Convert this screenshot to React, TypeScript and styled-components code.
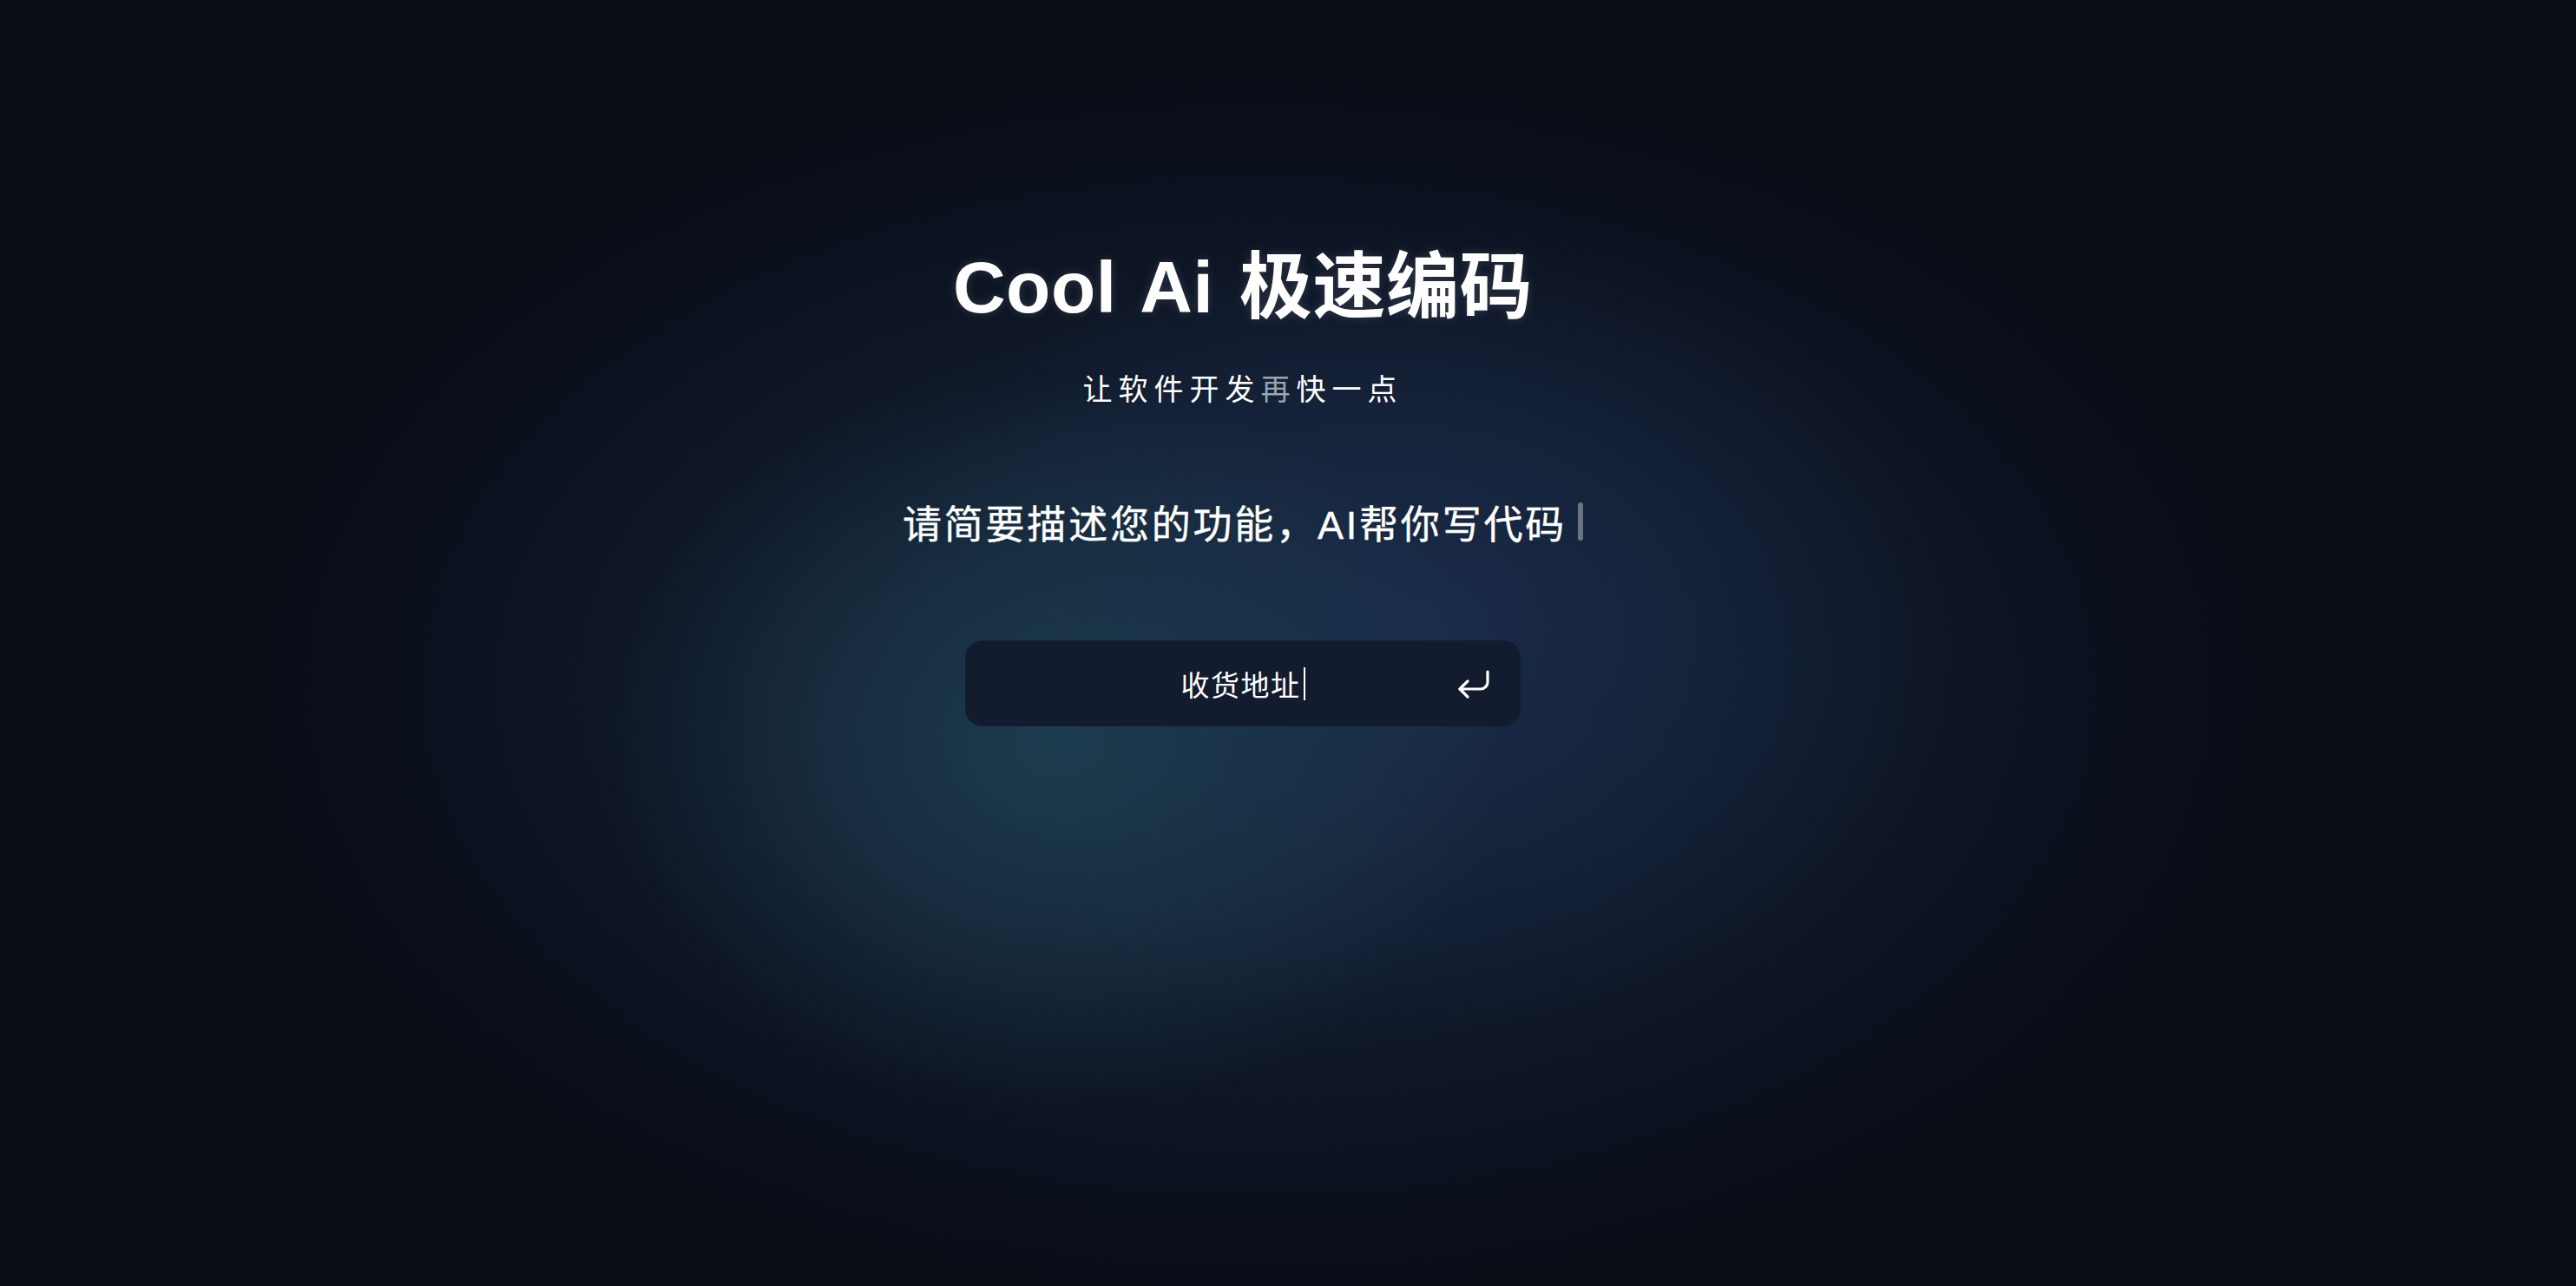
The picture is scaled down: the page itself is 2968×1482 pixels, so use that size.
import { FC } from 'react';
import styled, { createGlobalStyle } from 'styled-components';

const GlobalStyle = createGlobalStyle`
  html, body {
    margin: 0;
    padding: 0;
    background: #090d16;
  }
  * {
    box-sizing: border-box;
  }
`;

const Page = styled.div`
  width: 2968px;
  height: 1482px;
  overflow: hidden;
  display: flex;
  flex-direction: column;
  align-items: center;
  padding: 281px 104px 0 0;
  font-family: 'Liberation Sans', 'Noto Sans CJK SC', sans-serif;
  color: #ffffff;
  background:
    radial-gradient(ellipse 520px 430px at 1210px 860px, rgba(30, 64, 82, 0.85), rgba(30, 64, 82, 0) 100%),
    radial-gradient(ellipse 620px 470px at 1640px 720px, rgba(27, 46, 78, 0.75), rgba(27, 46, 78, 0) 100%),
    radial-gradient(ellipse 1180px 720px at 1450px 790px, #16253b 0%, #111c2e 45%, #0c1220 75%, #090d16 100%);
`;

const Title = styled.h1`
  margin: 0;
  height: 100px;
  line-height: 100px;
  font-size: 84px;
  font-weight: 700;
  letter-spacing: 0.5px;
  word-spacing: 6px;
  white-space: nowrap;
  text-shadow: 0 0 12px rgba(255, 255, 255, 0.14);
`;

const Subtitle = styled.div`
  margin-top: 43px;
  height: 50px;
  line-height: 50px;
  font-size: 34px;
  letter-spacing: 7px;
  white-space: nowrap;
`;

const Dim = styled.span`
  color: #9aa5b2;
`;

const Prompt = styled.div`
  margin-top: 97px;
  height: 60px;
  display: flex;
  align-items: center;
  font-size: 45px;
  letter-spacing: 2.8px;
  white-space: nowrap;
  -webkit-text-stroke: 0.4px #ffffff;
`;

const BlockCursor = styled.span`
  display: inline-block;
  width: 6px;
  height: 44px;
  margin-left: 13px;
  border-radius: 3px;
  background: #6b7482;
`;

const InputBox = styled.div`
  margin-top: 107px;
  width: 640px;
  height: 99px;
  border-radius: 20px;
  background: #131c2e;
  display: grid;
  grid-template-columns: 1fr auto 1fr;
  align-items: center;
  padding: 0 30px;
`;

const InputText = styled.div`
  grid-column: 2;
  display: flex;
  align-items: center;
  font-size: 33px;
  letter-spacing: 1.5px;
  white-space: nowrap;
`;

const Caret = styled.span`
  display: inline-block;
  width: 2px;
  height: 38px;
  margin-left: 3px;
  background: #ffffff;
`;

const EnterButton = styled.div`
  grid-column: 3;
  justify-self: end;
  display: flex;
  width: 48px;
  height: 48px;
  color: #ffffff;
`;

const EnterIcon: FC = () => (
  <svg
    width="48"
    height="48"
    viewBox="0 0 24 24"
    fill="none"
    stroke="currentColor"
    strokeWidth="1.6"
    strokeLinecap="round"
    strokeLinejoin="round"
  >
    <path d="M20 5v6a4 4 0 0 1-4 4H4" />
    <path d="m8.5 10.5-4.5 4.5 4.5 4.5" />
  </svg>
);

const App: FC = () => {
  return (
    <>
      <GlobalStyle />
      <Page>
        <Title>Cool Ai 极速编码</Title>
        <Subtitle>
          让软件开发<Dim>再</Dim>快一点
        </Subtitle>
        <Prompt>
          请简要描述您的功能，AI帮你写代码
          <BlockCursor />
        </Prompt>
        <InputBox>
          <InputText>
            收货地址
            <Caret />
          </InputText>
          <EnterButton>
            <EnterIcon />
          </EnterButton>
        </InputBox>
      </Page>
    </>
  );
};

export default App;
